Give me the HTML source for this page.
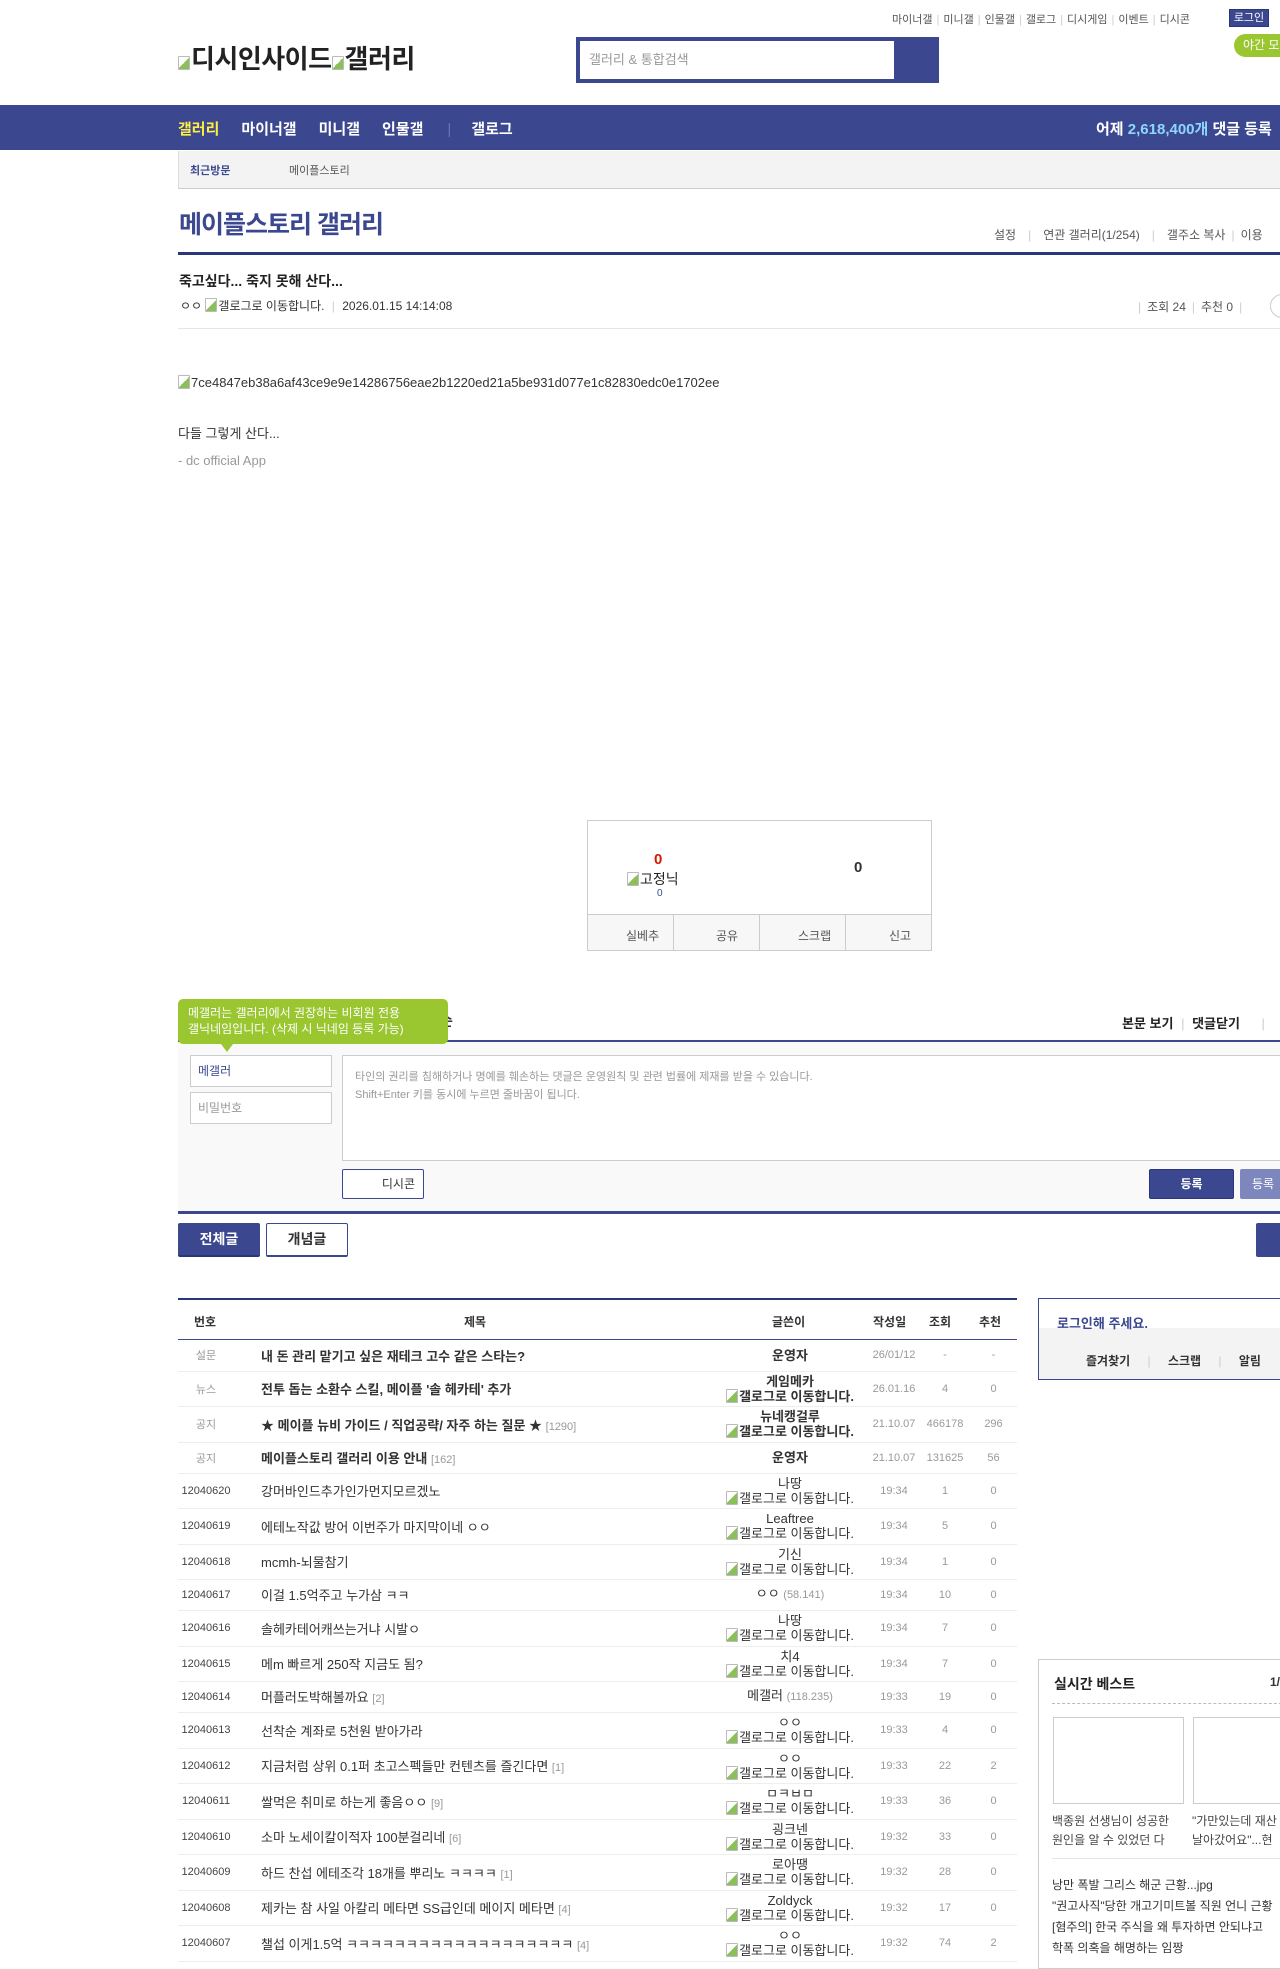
<!DOCTYPE html>
<html><head><meta charset="utf-8">
<style>
*{margin:0;padding:0;box-sizing:border-box}
body{width:1280px;height:1960px;overflow:hidden;position:relative;background:#fff;font-family:"Liberation Sans","Noto Sans CJK KR",sans-serif;color:#333;font-size:13px}
.a{position:absolute;white-space:nowrap}
.bi{display:inline-block;width:12px;height:14px;border:1px solid #bbb;border-radius:1px;background:linear-gradient(135deg,#fff 50%,#8bbf5a 50%);vertical-align:-2px;margin-right:1px}
table{border-collapse:collapse}
td{text-align:center;font-size:12px;color:#333}
td.n{font-size:11px;color:#444}
td.t{text-align:left;font-size:13px;padding-left:27px}
td.w{font-size:13px;line-height:15px}
tr{border-bottom:1px solid #eee}
.c{color:#999;font-size:11px}
.tl{font-size:11px;color:#555}
.tl i{font-style:normal;color:#ccc;margin:0 4px}
</style></head><body>

<div class="a tl" style="left:892px;top:11px">마이너갤<i>|</i>미니갤<i>|</i>인물갤<i>|</i>갤로그<i>|</i>디시게임<i>|</i>이벤트<i>|</i>디시콘</div>
<div class="a" style="left:1229px;top:9px;width:40px;height:18px;background:#3b4890;border:1px solid #29367a;color:#fff;font-size:11px;text-align:center;line-height:16px">로그인</div>
<div class="a" style="left:1234px;top:34px;width:60px;height:23px;background:#9ac630;border-radius:12px;color:#fff;font-size:12px;line-height:23px;padding-left:9px">야간 모드</div>

<div class="a" style="left:178px;top:39px;font-size:26px;color:#222;font-weight:bold;letter-spacing:-0.5px"><span class="bi"></span>디시인사이드<span class="bi"></span>갤러리</div>

<div class="a" style="left:576px;top:37px;width:363px;height:46px;background:#3b4890"></div>
<div class="a" style="left:580px;top:41px;width:314px;height:38px;background:#fff;color:#999;font-size:13px;line-height:38px;padding-left:9px">갤러리 &amp; 통합검색</div>

<div class="a" style="left:0;top:105px;width:1280px;height:45px;background:#3b4890"></div>
<div class="a" style="left:178px;top:118px;font-size:15px;font-weight:bold;color:#fff"><span style="color:#ffed44">갤러리</span><span style="margin-left:22px">마이너갤</span><span style="margin-left:22px">미니갤</span><span style="margin-left:22px">인물갤</span><span style="margin-left:24px;color:#6a75b0;font-weight:normal">|</span><span style="margin-left:20px">갤로그</span></div>
<div class="a" style="left:1096px;top:118px;font-size:15px;font-weight:bold;color:#fff">어제 <span style="color:#8fd6ff">2,618,400개</span> 댓글 등록</div>

<div class="a" style="left:178px;top:151px;width:1110px;height:38px;background:#f3f3f3;border-bottom:1px solid #ccc;border-left:1px solid #ddd"></div>
<div class="a" style="left:190px;top:162px;font-size:11px;font-weight:bold;color:#3b4890">최근방문</div>
<div class="a" style="left:289px;top:162px;font-size:11px;color:#555">메이플스토리</div>

<div class="a" style="left:179px;top:205px;font-size:25px;font-weight:bold;color:#3b4890;letter-spacing:-1px">메이플스토리 갤러리</div>
<div class="a tl" style="left:994px;top:226px;font-size:12px">설정<i style="margin:0 12px">|</i>연관 갤러리(1/254)<i style="margin:0 12px">|</i>갤주소 복사<i style="margin:0 6px">|</i>이용</div>
<div class="a" style="left:178px;top:252px;width:1110px;height:3px;background:#29367a"></div>

<div class="a" style="left:179px;top:271px;font-size:14px;font-weight:bold;color:#222">죽고싶다... 죽지 못해 산다...</div>
<div class="a" style="left:180px;top:297px;font-size:12px;color:#333">ㅇㅇ <span class="bi"></span>갤로그로 이동합니다. <span style="color:#ccc;margin:0 4px">|</span> 2026.01.15 14:14:08</div>
<div class="a tl" style="left:1132px;top:298px;font-size:12px"><i style="margin:0 6px">|</i>조회 24<i style="margin:0 6px">|</i>추천 0<i style="margin:0 6px">|</i></div>
<div class="a" style="left:1270px;top:294px;width:24px;height:24px;border:1px solid #ccc;border-radius:12px"></div>
<div class="a" style="left:178px;top:328px;width:1110px;height:1px;background:#e5e5e5"></div>

<div class="a" style="left:178px;top:375px;font-size:13px;color:#333"><span class="bi"></span>7ce4847eb38a6af43ce9e9e14286756eae2b1220ed21a5be931d077e1c82830edc0e1702ee</div>
<div class="a" style="left:178px;top:423px;font-size:13px;color:#333">다들 그렇게 산다...</div>
<div class="a" style="left:178px;top:453px;font-size:13px;color:#999">- dc official App</div>

<div class="a" style="left:587px;top:820px;width:345px;height:131px;border:1px solid #ccc"></div>
<div class="a" style="left:588px;top:914px;width:343px;height:36px;background:#f7f7f7;border-top:1px solid #ccc"></div>
<div class="a" style="left:673px;top:915px;width:1px;height:35px;background:#ccc"></div>
<div class="a" style="left:759px;top:915px;width:1px;height:35px;background:#ccc"></div>
<div class="a" style="left:845px;top:915px;width:1px;height:35px;background:#ccc"></div>
<div class="a" style="left:626px;top:927px;font-size:12px;color:#555">실베추</div>
<div class="a" style="left:716px;top:927px;font-size:12px;color:#555">공유</div>
<div class="a" style="left:798px;top:927px;font-size:12px;color:#555">스크랩</div>
<div class="a" style="left:889px;top:927px;font-size:12px;color:#555">신고</div>
<div class="a" style="left:654px;top:851px;font-size:15px;font-weight:bold;color:#d31900">0</div>
<div class="a" style="left:627px;top:869px;font-size:14px;color:#222"><span class="bi"></span>고정닉</div>
<div class="a" style="left:657px;top:888px;font-size:10px;color:#3b4890">0</div>
<div class="a" style="left:854px;top:859px;font-size:15px;font-weight:bold;color:#333">0</div>

<div class="a" style="left:440px;top:1011px;font-size:14px;font-weight:bold">순</div>
<div class="a" style="left:1122px;top:1013px;font-size:13px;font-weight:bold;color:#222">본문 보기 <span style="color:#ccc;font-weight:normal;margin:0 4px">|</span> 댓글닫기 <span style="color:#ccc;font-weight:normal;margin-left:18px">|</span></div>
<div class="a" style="left:178px;top:1040px;width:1110px;height:2px;background:#3b4890"></div>
<div class="a" style="left:178px;top:1042px;width:1110px;height:170px;background:#f9f9f9"></div>
<div class="a" style="left:178px;top:999px;width:270px;height:45px;background:#9ac630;border-radius:5px;color:#fff;font-size:12px;line-height:16px;padding:6px 0 0 10px">메갤러는 갤러리에서 권장하는 비회원 전용<br>갤닉네임입니다. (삭제 시 닉네임 등록 가능)</div>
<div class="a" style="left:221px;top:1044px;width:0;height:0;border-left:6px solid transparent;border-right:6px solid transparent;border-top:8px solid #9ac630"></div>
<div class="a" style="left:190px;top:1055px;width:142px;height:32px;background:#fff;border:1px solid #ccc;font-size:12px;color:#3b4890;line-height:30px;padding-left:7px">메갤러</div>
<div class="a" style="left:190px;top:1092px;width:142px;height:32px;background:#fff;border:1px solid #ccc;font-size:12px;color:#999;line-height:30px;padding-left:7px">비밀번호</div>
<div class="a" style="left:342px;top:1055px;width:950px;height:106px;background:#fff;border:1px solid #ccc;font-size:11px;color:#999;line-height:18px;padding:12px 12px">타인의 권리를 침해하거나 명예를 훼손하는 댓글은 운영원칙 및 관련 법률에 제재를 받을 수 있습니다.<br>Shift+Enter 키를 동시에 누르면 줄바꿈이 됩니다.</div>
<div class="a" style="left:342px;top:1169px;width:82px;height:30px;background:#fff;border:1px solid #3b4890;border-radius:2px;font-size:12px;color:#333;line-height:28px;text-align:right;padding-right:8px">디시콘</div>
<div class="a" style="left:1149px;top:1169px;width:85px;height:30px;background:#3b4890;border:1px solid #29367a;border-radius:2px;color:#fff;font-size:12px;font-weight:bold;line-height:28px;text-align:center">등록</div>
<div class="a" style="left:1240px;top:1169px;width:60px;height:30px;background:#7d87bd;border-radius:2px;color:#fff;font-size:12px;line-height:30px;padding-left:12px">등록</div>
<div class="a" style="left:178px;top:1211px;width:1110px;height:3px;background:#3b4890"></div>

<div class="a" style="left:178px;top:1223px;width:82px;height:34px;background:#3b4890;border-bottom:2px solid #29367a;border-radius:2px;color:#fff;font-size:14px;font-weight:bold;line-height:32px;text-align:center">전체글</div>
<div class="a" style="left:266px;top:1223px;width:82px;height:34px;background:#fff;border:1px solid #3b4890;border-bottom:2px solid #3b4890;border-radius:2px;color:#333;font-size:14px;font-weight:bold;line-height:30px;text-align:center">개념글</div>
<div class="a" style="left:1256px;top:1223px;width:40px;height:34px;background:#3b4890;border-radius:2px"></div>

<div class="a" style="left:178px;top:1298px;width:839px;height:2px;background:#29367a"></div>
<div class="a" style="left:178px;top:1339px;width:839px;height:1px;background:#3b4890"></div>
<div class="a" style="left:178px;top:1300px;width:839px;height:38px;font-size:12px;font-weight:bold;color:#333">
<span class="a" style="left:16px;top:13px">번호</span><span class="a" style="left:286px;top:13px">제목</span><span class="a" style="left:594px;top:13px">글쓴이</span><span class="a" style="left:695px;top:13px">작성일</span><span class="a" style="left:751px;top:13px">조회</span><span class="a" style="left:801px;top:13px">추천</span></div>

<table class="a" style="left:178px;top:1340px;width:839px">
<colgroup><col style="width:56px"><col style="width:478px"><col style="width:156px"><col style="width:52px"><col style="width:50px"><col style="width:47px"></colgroup>
<tr style="height:31px"><td class="c">설문</td><td class="t"><b>내 돈 관리 맡기고 싶은 재테크 고수 같은 스타는?</b></td><td class="w"><b>운영자</b></td><td class="c">26/01/12</td><td class="c">-</td><td class="c">-</td></tr>
<tr style="height:35px"><td class="c">뉴스</td><td class="t"><b>전투 돕는 소환수 스킬, 메이플 '솔 헤카테' 추가</b></td><td class="w"><b>게임메카<br><span class="bi"></span>갤로그로 이동합니다.</b></td><td class="c">26.01.16</td><td class="c">4</td><td class="c">0</td></tr>
<tr style="height:36px"><td class="c">공지</td><td class="t"><b>★ 메이플 뉴비 가이드 / 직업공략/ 자주 하는 질문 ★</b> <span class="c">[1290]</span></td><td class="w"><b>뉴네캥걸루<br><span class="bi"></span>갤로그로 이동합니다.</b></td><td class="c">21.10.07</td><td class="c">466178</td><td class="c">296</td></tr>
<tr style="height:31px"><td class="c">공지</td><td class="t"><b>메이플스토리 갤러리 이용 안내</b> <span class="c">[162]</span></td><td class="w"><b>운영자</b></td><td class="c">21.10.07</td><td class="c">131625</td><td class="c">56</td></tr>
<tr style="height:35px"><td class="n">12040620</td><td class="t">강머바인드추가인가먼지모르겠노</td><td class="w">나땅<br><span class="bi"></span>갤로그로 이동합니다.</td><td class="c">19:34</td><td class="c">1</td><td class="c">0</td></tr>
<tr style="height:36px"><td class="n">12040619</td><td class="t">에테노작값 방어 이번주가 마지막이네 ㅇㅇ</td><td class="w">Leaftree<br><span class="bi"></span>갤로그로 이동합니다.</td><td class="c">19:34</td><td class="c">5</td><td class="c">0</td></tr>
<tr style="height:35px"><td class="n">12040618</td><td class="t">mcmh-뇌물참기</td><td class="w">기신<br><span class="bi"></span>갤로그로 이동합니다.</td><td class="c">19:34</td><td class="c">1</td><td class="c">0</td></tr>
<tr style="height:31px"><td class="n">12040617</td><td class="t">이걸 1.5억주고 누가삼 ㅋㅋ</td><td class="w">ㅇㅇ <span class="c">(58.141)</span></td><td class="c">19:34</td><td class="c">10</td><td class="c">0</td></tr>
<tr style="height:36px"><td class="n">12040616</td><td class="t">솔헤카테어캐쓰는거냐 시발ㅇ</td><td class="w">나땅<br><span class="bi"></span>갤로그로 이동합니다.</td><td class="c">19:34</td><td class="c">7</td><td class="c">0</td></tr>
<tr style="height:35px"><td class="n">12040615</td><td class="t">메m 빠르게 250작 지금도 됨?</td><td class="w">치4<br><span class="bi"></span>갤로그로 이동합니다.</td><td class="c">19:34</td><td class="c">7</td><td class="c">0</td></tr>
<tr style="height:31px"><td class="n">12040614</td><td class="t">머플러도박해볼까요 <span class="c">[2]</span></td><td class="w">메갤러 <span class="c">(118.235)</span></td><td class="c">19:33</td><td class="c">19</td><td class="c">0</td></tr>
<tr style="height:36px"><td class="n">12040613</td><td class="t">선착순 계좌로 5천원 받아가라</td><td class="w">ㅇㅇ<br><span class="bi"></span>갤로그로 이동합니다.</td><td class="c">19:33</td><td class="c">4</td><td class="c">0</td></tr>
<tr style="height:35px"><td class="n">12040612</td><td class="t">지금처럼 상위 0.1퍼 초고스펙들만 컨텐츠를 즐긴다면 <span class="c">[1]</span></td><td class="w">ㅇㅇ<br><span class="bi"></span>갤로그로 이동합니다.</td><td class="c">19:33</td><td class="c">22</td><td class="c">2</td></tr>
<tr style="height:36px"><td class="n">12040611</td><td class="t">쌀먹은 취미로 하는게 좋음ㅇㅇ <span class="c">[9]</span></td><td class="w">ㅁㅋㅂㅁ<br><span class="bi"></span>갤로그로 이동합니다.</td><td class="c">19:33</td><td class="c">36</td><td class="c">0</td></tr>
<tr style="height:35px"><td class="n">12040610</td><td class="t">소마 노세이칼이적자 100분걸리네 <span class="c">[6]</span></td><td class="w">굉크넨<br><span class="bi"></span>갤로그로 이동합니다.</td><td class="c">19:32</td><td class="c">33</td><td class="c">0</td></tr>
<tr style="height:36px"><td class="n">12040609</td><td class="t">하드 찬섭 에테조각 18개를 뿌리노 ㅋㅋㅋㅋ <span class="c">[1]</span></td><td class="w">로아땡<br><span class="bi"></span>갤로그로 이동합니다.</td><td class="c">19:32</td><td class="c">28</td><td class="c">0</td></tr>
<tr style="height:35px"><td class="n">12040608</td><td class="t">제카는 참 사일 아칼리 메타면 SS급인데 메이지 메타면 <span class="c">[4]</span></td><td class="w">Zoldyck<br><span class="bi"></span>갤로그로 이동합니다.</td><td class="c">19:32</td><td class="c">17</td><td class="c">0</td></tr>
<tr style="height:36px"><td class="n">12040607</td><td class="t">챌섭 이게1.5억 ㅋㅋㅋㅋㅋㅋㅋㅋㅋㅋㅋㅋㅋㅋㅋㅋㅋㅋㅋ <span class="c">[4]</span></td><td class="w">ㅇㅇ<br><span class="bi"></span>갤로그로 이동합니다.</td><td class="c">19:32</td><td class="c">74</td><td class="c">2</td></tr>
</table>

<div class="a" style="left:1038px;top:1298px;width:260px;height:82px;border:1px solid #3b4890;background:#fff"></div>
<div class="a" style="left:1039px;top:1328px;width:260px;height:51px;background:#f3f3f3"></div>
<div class="a" style="left:1057px;top:1313px;font-size:13px;font-weight:bold;color:#3b4890">로그인해 주세요.</div>
<div class="a" style="left:1086px;top:1352px;font-size:12px;font-weight:bold;color:#333">즐겨찾기 <span style="color:#ccc;font-weight:normal;margin:0 14px">|</span> 스크랩 <span style="color:#ccc;font-weight:normal;margin:0 14px">|</span> 알림</div>

<div class="a" style="left:1038px;top:1659px;width:260px;height:310px;border:1px solid #ccc"></div>
<div class="a" style="left:1054px;top:1674px;font-size:14px;font-weight:bold;color:#222">실시간 베스트</div>
<div class="a" style="left:1270px;top:1675px;font-size:12px;font-weight:bold">1/</div>
<div class="a" style="left:1052px;top:1703px;width:240px;border-top:1px dashed #bbb"></div>
<div class="a" style="left:1053px;top:1717px;width:131px;height:87px;border:1px solid #ccc"></div>
<div class="a" style="left:1193px;top:1717px;width:131px;height:87px;border:1px solid #ccc"></div>
<div class="a" style="left:1052px;top:1812px;font-size:12px;color:#444;line-height:19px">백종원 선생님이 성공한<br>원인을 알 수 있었던 다</div>
<div class="a" style="left:1192px;top:1812px;font-size:12px;color:#444;line-height:19px">"가만있는데 재산<br>날아갔어요"...현</div>
<div class="a" style="left:1052px;top:1858px;width:240px;border-top:1px solid #e5e5e5"></div>
<div class="a" style="left:1052px;top:1875px;font-size:12px;color:#333;line-height:21px">낭만 폭발 그리스 해군 근황...jpg<br>"권고사직"당한 개고기미트볼 직원 언니 근황<br>[혐주의] 한국 주식을 왜 투자하면 안되냐고<br>학폭 의혹을 해명하는 임짱</div>
</body></html>
